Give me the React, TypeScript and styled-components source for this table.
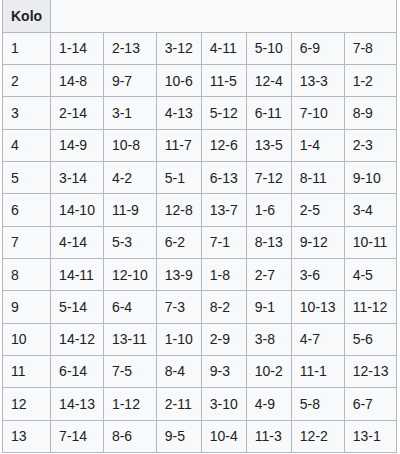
import React from "react";
import styled, { createGlobalStyle } from "styled-components";

const Global = createGlobalStyle`
  html, body { margin: 0; padding: 0; background: #ffffff; }
  body { font-family: "Liberation Sans", Arial, sans-serif; color: #202122; }
`;

const Table = styled.table`
  margin: -1px 0 0 2px;
  border-collapse: collapse;
  background: #f8f9fa;
  color: #202122;
  border: 1px solid #b4b9c0;
  font-size: 14px;
`;

const HeadCell = styled.th`
  background: #eaecf0;
  border: 1px solid #b4b9c0;
  font-weight: bold;
  text-align: left;
  padding: 4.7px 8px;
  line-height: 22.33px;
`;

const Cell = styled.td`
  border: 1px solid #b4b9c0;
  padding: 4.5px 8px;
  line-height: 22.33px;
  white-space: nowrap;
  text-align: left;
`;

const rows: string[][] = [
  ["1-14", "2-13", "3-12", "4-11", "5-10", "6-9", "7-8"],
  ["14-8", "9-7", "10-6", "11-5", "12-4", "13-3", "1-2"],
  ["2-14", "3-1", "4-13", "5-12", "6-11", "7-10", "8-9"],
  ["14-9", "10-8", "11-7", "12-6", "13-5", "1-4", "2-3"],
  ["3-14", "4-2", "5-1", "6-13", "7-12", "8-11", "9-10"],
  ["14-10", "11-9", "12-8", "13-7", "1-6", "2-5", "3-4"],
  ["4-14", "5-3", "6-2", "7-1", "8-13", "9-12", "10-11"],
  ["14-11", "12-10", "13-9", "1-8", "2-7", "3-6", "4-5"],
  ["5-14", "6-4", "7-3", "8-2", "9-1", "10-13", "11-12"],
  ["14-12", "13-11", "1-10", "2-9", "3-8", "4-7", "5-6"],
  ["6-14", "7-5", "8-4", "9-3", "10-2", "11-1", "12-13"],
  ["14-13", "1-12", "2-11", "3-10", "4-9", "5-8", "6-7"],
  ["7-14", "8-6", "9-5", "10-4", "11-3", "12-2", "13-1"],
];

export default function App() {
  return (
    <>
      <Global />
      <Table>
        <tbody>
          <tr>
            <HeadCell>Kolo</HeadCell>
          </tr>
          {rows.map((r, i) => (
            <tr key={i}>
              <Cell>{i + 1}</Cell>
              {r.map((m, j) => (
                <Cell key={j}>{m}</Cell>
              ))}
            </tr>
          ))}
        </tbody>
      </Table>
    </>
  );
}
